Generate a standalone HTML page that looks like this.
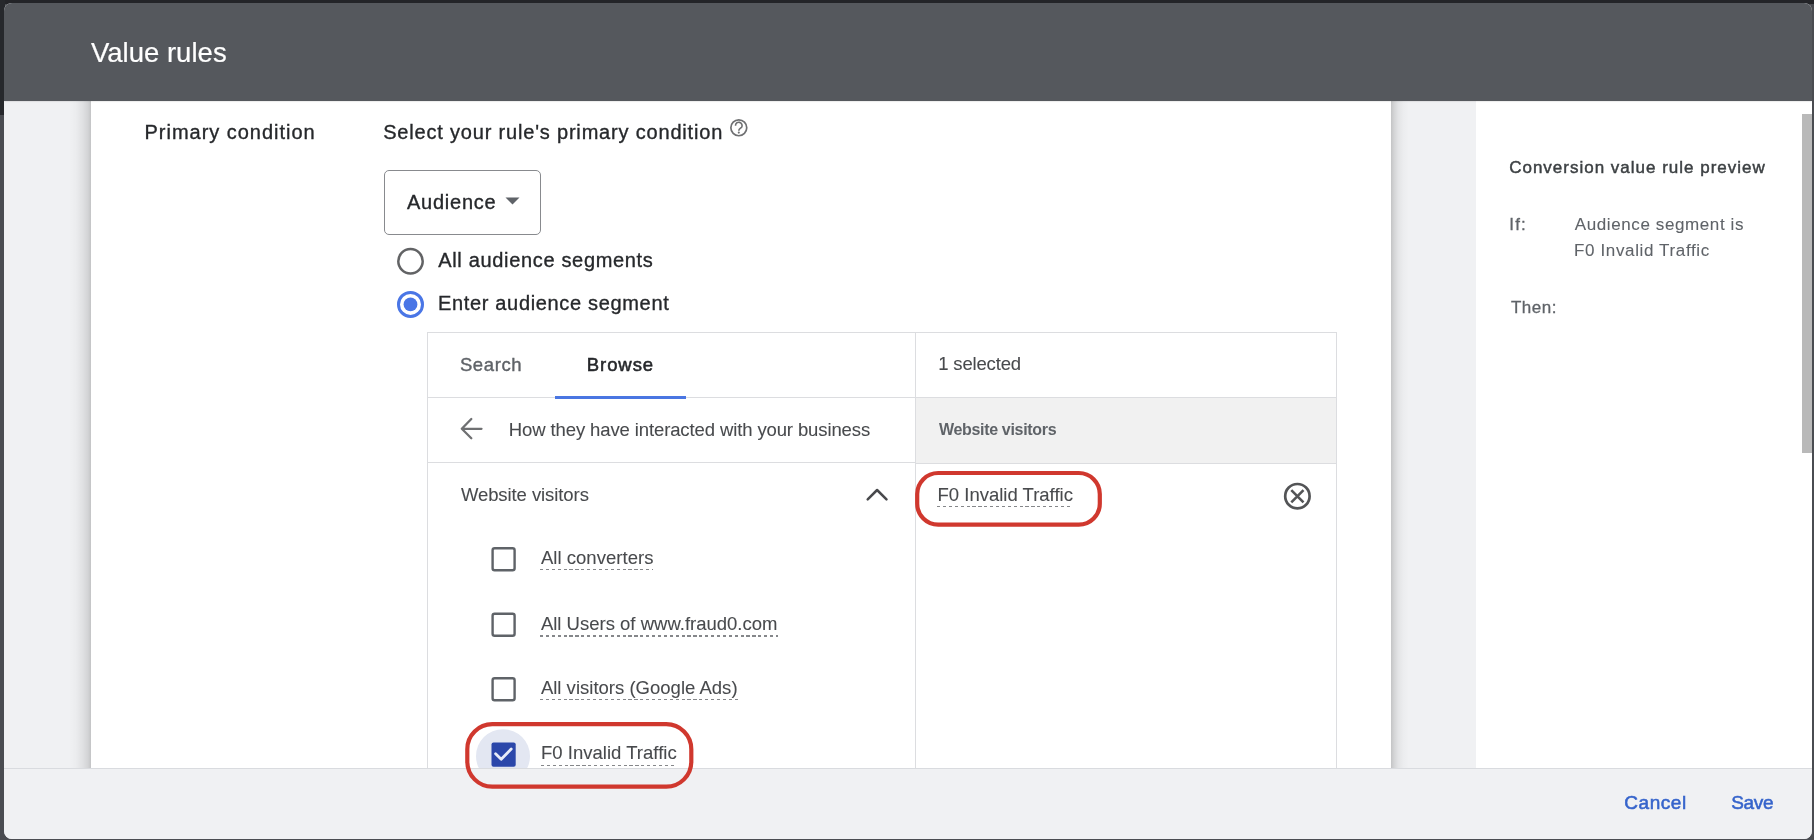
<!DOCTYPE html>
<html><head><meta charset="utf-8">
<style>
*{margin:0;padding:0;box-sizing:border-box}
html,body{width:1814px;height:840px;overflow:hidden;background:#4a4c51;font-family:"Liberation Sans",sans-serif;position:relative}
.a{position:absolute}
.t{position:absolute;white-space:nowrap;z-index:10;transform:translateZ(0)}
#topstrip{left:0;top:0;width:1814px;height:4px;background:#232428}
#dlg{left:4px;top:3px;width:1808px;height:835.5px;border-radius:8px;overflow:hidden;background:#f0f1f3}
#hdr{left:0;top:0;width:1808px;height:97.5px;background:#55585d;box-shadow:0 0.5px 1.5px rgba(0,0,0,.18);z-index:3}
#card{left:87px;top:97px;width:1300px;height:668px;background:#fff}
#shl{left:65px;top:97px;width:22px;height:668px;background:linear-gradient(to left,rgba(0,0,0,.19) 0,rgba(0,0,0,.12) 3px,rgba(0,0,0,.07) 8px,rgba(0,0,0,.02) 15px,rgba(0,0,0,0) 22px)}
#shr{left:1387px;top:97px;width:18px;height:668px;background:linear-gradient(to right,rgba(0,0,0,.19) 0,rgba(0,0,0,.12) 3px,rgba(0,0,0,.06) 7px,rgba(0,0,0,.02) 12px,rgba(0,0,0,0) 18px)}
#side{left:1472px;top:97px;width:336px;height:668px;background:#fff}
#sb{left:1798px;top:111px;width:10px;height:339px;background:#b9b9b9}
#footer{left:0;top:765px;width:1808px;height:71px;background:#f0f1f3;border-top:1px solid #d9dbdf;z-index:15}
#dd{left:384px;top:169.5px;width:156.5px;height:65px;border:1.5px solid #888a8e;border-radius:5px;z-index:5}
#panel{left:427px;top:332px;width:910px;height:460px;border:1px solid #dcdde0;z-index:5}
#pdiv{left:915px;top:332px;width:1px;height:460px;background:#dcdde0;z-index:6}
#l1{left:427px;top:397px;width:910px;height:1px;background:#dcdde0;z-index:6}
#l2{left:427px;top:462px;width:489px;height:1px;background:#dcdde0;z-index:6}
#l3{left:916px;top:463px;width:420px;height:1px;background:#dcdde0;z-index:7}
#band{left:916px;top:398px;width:420px;height:65px;background:#f1f1f1;z-index:6}
#tabul{left:555px;top:396.2px;width:131px;height:2.5px;background:#4a76e2;z-index:7}
.ul{position:absolute;height:1.2px;background:repeating-linear-gradient(to right,#85878a 0,#85878a 3.2px,transparent 3.2px,transparent 5.9px);z-index:9}
svg.i{position:absolute;overflow:visible;z-index:9}
</style></head>
<body>
<div id="topstrip" class="a"></div><div class="a" style="left:0;top:0;width:5px;height:115px;background:#26282c"></div>
<div id="dlg" class="a">
  <div id="hdr" class="a"></div>
  <div id="shl" class="a"></div><div id="shr" class="a"></div><div id="card" class="a"></div>
  <div id="side" class="a"><div></div></div>
  <div id="sb" class="a"></div>
  <div id="footer" class="a"></div>
</div>
<div id="dd" class="a"></div>
<div id="panel" class="a"></div>
<div id="pdiv" class="a"></div>
<div id="l1" class="a"></div>
<div id="l2" class="a"></div><div id="l3" class="a"></div>
<div id="band" class="a"></div>
<div id="tabul" class="a"></div>
<svg class="i" width="1814" height="840" style="left:0;top:0;z-index:9">
  <!-- help icon -->
  <circle cx="738.8" cy="127.8" r="7.95" fill="none" stroke="#6f7072" stroke-width="1.7"/>
  <path d="M735.5 125.7 A3.3 3.3 0 1 1 741.6 127.3 C740.6 128.4 738.8 128.9 738.8 130.7" fill="none" stroke="#6f7072" stroke-width="1.6"/>
  <circle cx="738.8" cy="132.6" r="1.05" fill="#6f7072"/>
  <!-- dropdown arrow -->
  <path d="M505.5 197.5 L519.5 197.5 L512.5 204.5 Z" fill="#5f6368"/>
  <!-- radios -->
  <circle cx="410.5" cy="261.3" r="12.2" fill="none" stroke="#626365" stroke-width="2.5"/>
  <circle cx="410.5" cy="304.4" r="12" fill="none" stroke="#4a76e6" stroke-width="3"/>
  <circle cx="410.5" cy="304.4" r="6.9" fill="#4a76e6"/>
  <!-- back arrow -->
  <path d="M481.5 428.8 H462.5 M471.3 419 L461.8 428.8 L471.3 438.3" fill="none" stroke="#6f7072" stroke-width="2.3" stroke-linecap="round" stroke-linejoin="round"/>
  <!-- chevron up -->
  <path d="M867.7 499.3 L877.1 490 L886.5 499.3" fill="none" stroke="#48494c" stroke-width="2.5" stroke-linecap="round" stroke-linejoin="round"/>
  <!-- close icon -->
  <circle cx="1297.4" cy="496.2" r="12.2" fill="none" stroke="#535456" stroke-width="2.7"/>
  <path d="M1291.3 490.1 L1303.5 502.3 M1303.5 490.1 L1291.3 502.3" fill="none" stroke="#535456" stroke-width="2.6"/>
  <!-- checkboxes -->
  <rect x="492.6" y="548.2" width="22" height="22" rx="2" fill="none" stroke="#5f6368" stroke-width="2.4"/>
  <rect x="492.6" y="613.8" width="22" height="22" rx="2" fill="none" stroke="#5f6368" stroke-width="2.4"/>
  <rect x="492.6" y="678.2" width="22" height="22" rx="2" fill="none" stroke="#5f6368" stroke-width="2.4"/>
  <circle cx="503" cy="756.2" r="27" fill="#e3e7f2"/>
  <rect x="491.5" y="742.5" width="24.2" height="24.2" rx="2" fill="#2b47aa"/>
  <path d="M495.6 753.8 L501.2 759.3 L511.2 749" fill="none" stroke="#e8ecf8" stroke-width="2.8" stroke-linecap="round" stroke-linejoin="round"/>
</svg>
<div class="ul" style="left:937px;top:506px;width:136px"></div>
<div class="ul" style="left:540px;top:569.3px;width:113px"></div>
<div class="ul" style="left:540px;top:635.4px;width:237.5px"></div>
<div class="ul" style="left:540px;top:699px;width:197.5px"></div>
<div class="ul" style="left:540.5px;top:764.6px;width:136px"></div>
<svg class="i" width="1814" height="840" style="left:0;top:0;z-index:20">
  <rect x="917.2" y="473" width="182.6" height="51.7" rx="21" fill="none" stroke="#d0382e" stroke-width="4.2"/>
  <rect x="467.3" y="724.2" width="224" height="62.5" rx="25" fill="none" stroke="#d0382e" stroke-width="4.2"/>
</svg>
<div class="t" style="left:90.90px;top:38.72px;font-size:27.50px;line-height:27.50px;color:#ffffff;letter-spacing:0.020px;-webkit-text-stroke:0.20px #ffffff;">Value rules</div>
<div class="t" style="left:144.50px;top:121.67px;font-size:20.00px;line-height:20.00px;color:#26282b;letter-spacing:0.980px;-webkit-text-stroke:0.35px #26282b;">Primary condition</div>
<div class="t" style="left:383.20px;top:121.77px;font-size:20.00px;line-height:20.00px;color:#26282b;letter-spacing:0.813px;-webkit-text-stroke:0.35px #26282b;">Select your rule's primary condition</div>
<div class="t" style="left:406.90px;top:191.67px;font-size:20.00px;line-height:20.00px;color:#26282b;letter-spacing:0.769px;-webkit-text-stroke:0.35px #26282b;">Audience</div>
<div class="t" style="left:438.22px;top:249.57px;font-size:20.00px;line-height:20.00px;color:#26282b;letter-spacing:0.668px;-webkit-text-stroke:0.35px #26282b;">All audience segments</div>
<div class="t" style="left:438.01px;top:293.37px;font-size:20.00px;line-height:20.00px;color:#26282b;letter-spacing:0.663px;-webkit-text-stroke:0.35px #26282b;">Enter audience segment</div>
<div class="t" style="left:459.88px;top:355.64px;font-size:18.50px;line-height:18.50px;color:#5f6368;letter-spacing:0.624px;-webkit-text-stroke:0.38px #5f6368;">Search</div>
<div class="t" style="left:586.84px;top:355.64px;font-size:18.50px;line-height:18.50px;color:#26282b;letter-spacing:0.912px;-webkit-text-stroke:0.55px #26282b;">Browse</div>
<div class="t" style="left:938.20px;top:355.34px;font-size:18.50px;line-height:18.50px;color:#484a4d;letter-spacing:-0.157px;-webkit-text-stroke:0.08px #484a4d;">1 selected</div>
<div class="t" style="left:508.86px;top:420.54px;font-size:18.50px;line-height:18.50px;color:#484a4d;letter-spacing:-0.114px;-webkit-text-stroke:0.08px #484a4d;">How they have interacted with your business</div>
<div class="t" style="left:938.90px;top:422.15px;font-size:16.00px;line-height:16.00px;color:#5f6368;letter-spacing:-0.315px;font-weight:bold;-webkit-text-stroke:0.00px #5f6368;">Website visitors</div>
<div class="t" style="left:460.90px;top:486.14px;font-size:18.50px;line-height:18.50px;color:#484a4d;letter-spacing:-0.080px;-webkit-text-stroke:0.08px #484a4d;">Website visitors</div>
<div class="t" style="left:937.52px;top:485.74px;font-size:18.50px;line-height:18.50px;color:#484a4d;letter-spacing:-0.001px;-webkit-text-stroke:0.08px #484a4d;">F0 Invalid Traffic</div>
<div class="t" style="left:540.88px;top:548.94px;font-size:18.50px;line-height:18.50px;color:#484a4d;letter-spacing:0.035px;-webkit-text-stroke:0.08px #484a4d;">All converters</div>
<div class="t" style="left:540.88px;top:614.74px;font-size:18.50px;line-height:18.50px;color:#484a4d;letter-spacing:0.005px;-webkit-text-stroke:0.08px #484a4d;">All Users of www.fraud0.com</div>
<div class="t" style="left:540.88px;top:678.54px;font-size:18.50px;line-height:18.50px;color:#484a4d;letter-spacing:0.012px;-webkit-text-stroke:0.08px #484a4d;">All visitors (Google Ads)</div>
<div class="t" style="left:541.03px;top:743.94px;font-size:18.50px;line-height:18.50px;color:#484a4d;letter-spacing:0.019px;-webkit-text-stroke:0.08px #484a4d;">F0 Invalid Traffic</div>
<div class="t" style="left:1509.20px;top:158.51px;font-size:17.00px;line-height:17.00px;color:#3c4043;letter-spacing:0.996px;-webkit-text-stroke:0.45px #3c4043;">Conversion value rule preview</div>
<div class="t" style="left:1509.28px;top:215.51px;font-size:17.00px;line-height:17.00px;color:#5f6368;letter-spacing:1.200px;-webkit-text-stroke:0.30px #5f6368;">If:</div>
<div class="t" style="left:1574.71px;top:215.81px;font-size:17.00px;line-height:17.00px;color:#5f6368;letter-spacing:0.609px;-webkit-text-stroke:0.08px #5f6368;">Audience segment is</div>
<div class="t" style="left:1574.01px;top:241.71px;font-size:17.00px;line-height:17.00px;color:#5f6368;letter-spacing:0.635px;-webkit-text-stroke:0.08px #5f6368;">F0 Invalid Traffic</div>
<div class="t" style="left:1510.90px;top:299.11px;font-size:17.00px;line-height:17.00px;color:#5f6368;letter-spacing:0.550px;-webkit-text-stroke:0.30px #5f6368;">Then:</div>
<div class="t" style="z-index:16;left:1624.29px;top:793.41px;font-size:19.00px;line-height:19.00px;color:#3664cb;letter-spacing:0.556px;-webkit-text-stroke:0.55px #3664cb;">Cancel</div>
<div class="t" style="z-index:16;left:1731.15px;top:793.41px;font-size:19.00px;line-height:19.00px;color:#3664cb;letter-spacing:-0.303px;-webkit-text-stroke:0.55px #3664cb;">Save</div>
</body></html>
